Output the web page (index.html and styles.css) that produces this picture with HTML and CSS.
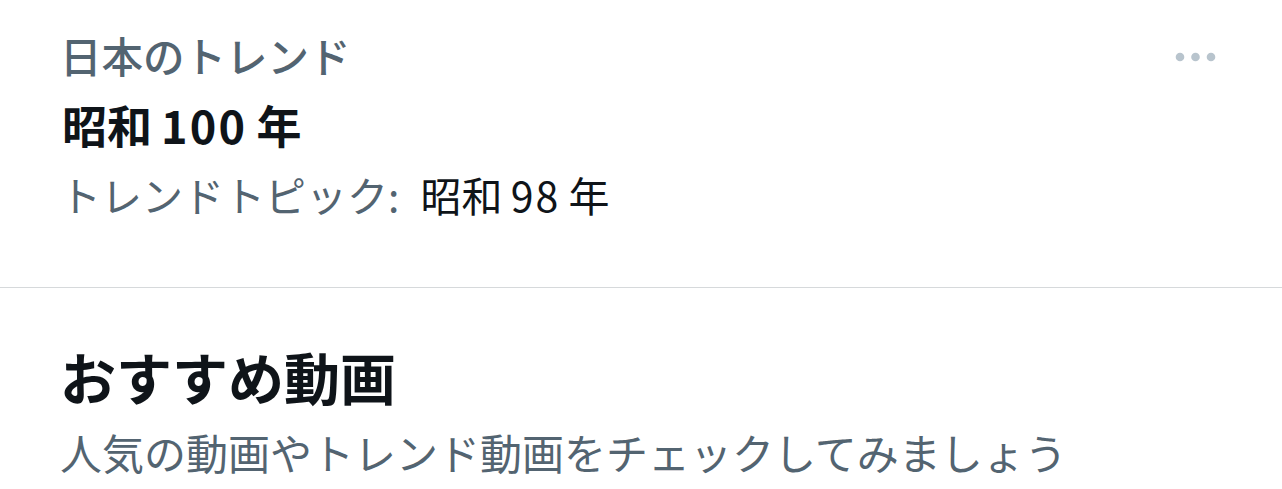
FILE: index.html
```html
<!DOCTYPE html>
<html lang="ja">

<head>
    <title>トレンド</title>
    <link rel="stylesheet" href="styles.css">
</head>

<body>
<div class="trend-item">
    <div class="trend-body">
        <div class="trend-meta">日本のトレンド</div>
        <div class="trend-title">昭和<span class="num">100</span>年</div>
        <div class="trend-topic">トレンドトピック: <span class="topic-name">昭和<span class="num">98</span>年</span></div>
    </div>
    <div class="trend-more">
        <svg width="44" height="12" viewBox="0 0 44 12">
            <circle cx="6" cy="6" r="4.3" fill="#b8c4cd"/>
            <circle cx="21.5" cy="6" r="4.3" fill="#b8c4cd"/>
            <circle cx="37" cy="6" r="4.3" fill="#b8c4cd"/>
        </svg>
    </div>
</div>

<div class="video-section">
    <h2 class="section-title">おすすめ動画</h2>
    <p class="section-desc">人気の動画やトレンド動画をチェックしてみましょう</p>
</div>
</body>

</html>
```

FILE: styles.css
```css
body {
    margin: 0;
    background-color: #fff;
    font-family: "Noto Sans CJK JP", "Noto Sans", sans-serif;
    color: #0f1419;
}

.trend-item {
    display: flex;
    justify-content: space-between;
    padding: 20px 62px 0 62px;
    height: 267px;
    border-bottom: 1px solid #d6d9db;
}

.trend-meta {
    font-size: 41.5px;
    font-weight: 500;
    line-height: 70px;
    color: #536471;
    margin-left: -2px;
}

.trend-title {
    font-size: 45px;
    font-weight: bold;
    line-height: 70px;
}

.trend-topic {
    font-size: 41px;
    line-height: 68px;
    color: #536471;
    margin-left: -2px;
}

.topic-name {
    color: #0f1419;
    margin-left: 12px;
}

.num {
    margin: 0 0.2em;
    letter-spacing: 0.05em;
}

.trend-more {
    padding-top: 24px;
    margin-right: 2px;
}

.video-section {
    padding: 48px 62px 0 60px;
}

.section-title {
    margin: 0;
    font-size: 56px;
    font-weight: bold;
    line-height: 80px;
}

.section-desc {
    margin: 0;
    font-size: 42px;
    line-height: 72px;
    color: #536471;
}
```
